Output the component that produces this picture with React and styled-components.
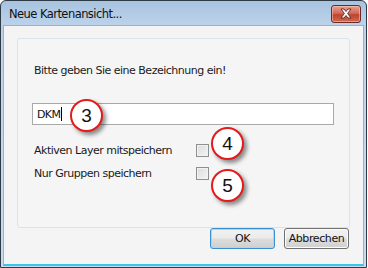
import React from "react";
import styled, { createGlobalStyle } from "styled-components";

const GlobalStyle = createGlobalStyle`
  html, body {
    margin: 0;
    padding: 0;
    background: #ffffff;
  }
  body {
    font-family: "DejaVu Sans", "Liberation Sans", sans-serif;
  }
`;

function App() {
  return (
    <>
      <GlobalStyle />
      <Window>
        <TitleBar>
          <Title>Neue Kartenansicht...</Title>
          <CloseBtn>
            <svg width="14" height="11" viewBox="0 0 14 11">
              <path
                d="M2 1 L5 1 L7 3.5 L9 1 L12 1 L8.6 5.5 L12 10 L9 10 L7 7.5 L5 10 L2 10 L5.4 5.5 Z"
                fill="#ffffff"
                stroke="#5a2420"
                strokeWidth="0.9"
                strokeLinejoin="round"
              />
            </svg>
          </CloseBtn>
        </TitleBar>
        <Client>
          <Panel>
            <Prompt>Bitte geben Sie eine Bezeichnung ein!</Prompt>
            <InputWrap>
              <Input>
                DKM<Caret />
              </Input>
              <Callout x={38} y={-4}>3</Callout>
            </InputWrap>
            <CheckRow first>
              <Label>Aktiven Layer mitspeichern</Label>
              <Checkbox />
              <Callout x={179} y={-17}>4</Callout>
            </CheckRow>
            <CheckRow>
              <Label>Nur Gruppen speichern</Label>
              <Checkbox />
              <Callout x={179} y={2}>5</Callout>
            </CheckRow>
          </Panel>
          <ButtonRow>
            <Button primary>OK</Button>
            <Button>Abbrechen</Button>
          </ButtonRow>
        </Client>
      </Window>
    </>
  );
}

const Window = styled.div`
  box-sizing: border-box;
  width: 367px;
  height: 268px;
  border: 1px solid #2e3a46;
  border-radius: 6px 6px 0 0;
  background: linear-gradient(to bottom, #a8c3df 0px, #bcd2ea 24px, #c9dcef 100%);
  padding: 0 2px 1px 2px;
  display: flex;
  flex-direction: column;
`;

const TitleBar = styled.div`
  height: 24px;
  display: flex;
  align-items: center;
  justify-content: space-between;
  padding: 0 3px 0 6px;
`;

const Title = styled.div`
  font-family: "DejaVu Sans", sans-serif;
  font-size: 11.5px;
  color: #101010;
  letter-spacing: -0.55px;
  margin-top: 2px;
`;

const CloseBtn = styled.div`
  box-sizing: border-box;
  width: 30px;
  height: 18px;
  margin-top: 1px;
  border: 1px solid #6b2a25;
  border-radius: 3px;
  background: linear-gradient(to bottom, #e8a090 0%, #d46a58 45%, #c0432f 55%, #cf6a52 100%);
  display: flex;
  align-items: center;
  justify-content: center;
  box-shadow: inset 0 0 0 1px rgba(255, 210, 200, 0.5);
`;

const Client = styled.div`
  flex: 1;
  background: #f4f4f4;
  border: 1px solid #8fb4d6;
  border-bottom: 2px solid #3cc4ea;
  display: flex;
  flex-direction: column;
  padding: 12px 13px 15px 13px;
`;

const Panel = styled.div`
  position: relative;
  height: 164px;
  border: 1px solid #d9e3ec;
  border-radius: 3px;
  background: #f5f5f5;
  padding: 24px 15px 0 14px;
`;

const Prompt = styled.div`
  font-family: "DejaVu Sans", sans-serif;
  font-size: 11px;
  line-height: 15px;
  color: #1a1a1a;
  padding-left: 2px;
  letter-spacing: -0.5px;
`;

const InputWrap = styled.div`
  position: relative;
  margin-top: 25px;
`;

const Input = styled.div`
  box-sizing: border-box;
  height: 22px;
  border: 1px solid #a9a9a9;
  background: #ffffff;
  display: flex;
  align-items: center;
  padding-left: 4px;
  font-family: "DejaVu Sans", sans-serif;
  font-size: 11px;
  letter-spacing: -0.6px;
  color: #111;
`;

const Caret = styled.span`
  display: inline-block;
  width: 1px;
  height: 14px;
  background: #000;
  margin-left: 1px;
`;

const CheckRow = styled.div`
  position: relative;
  display: flex;
  align-items: center;
  height: 13px;
  margin-top: ${(p) => (p.first ? "19px" : "10px")};
`;

const Label = styled.div`
  width: 162px;
  padding-left: 2px;
  font-family: "DejaVu Sans", sans-serif;
  font-size: 11px;
  color: #1a1a1a;
  letter-spacing: -0.5px;
`;

const Checkbox = styled.div`
  box-sizing: border-box;
  width: 13px;
  height: 13px;
  border: 1px solid #8f8f8f;
  background: linear-gradient(135deg, #dcdcdc 0%, #f4f4f4 100%);
  box-shadow: inset 0 0 0 1px #f2f2f2;
`;

const Callout = styled.div`
  position: absolute;
  left: ${(p) => p.x}px;
  top: ${(p) => p.y}px;
  box-sizing: border-box;
  width: 33px;
  height: 33px;
  border-radius: 50%;
  border: 2.5px solid #e31b1b;
  background: #ffffff;
  box-shadow: 3px 3px 4px rgba(0, 0, 0, 0.45);
  display: flex;
  align-items: center;
  justify-content: center;
  font-family: "Liberation Sans", sans-serif;
  font-size: 19px;
  color: #111;
`;

const ButtonRow = styled.div`
  margin-top: auto;
  display: flex;
  justify-content: flex-end;
  gap: 9px;
  padding-right: 1px;
`;

const Button = styled.div`
  box-sizing: border-box;
  width: 65px;
  height: 21px;
  border-radius: 3px;
  border: 1px solid ${(p) => (p.primary ? "#3c8fcf" : "#707070")};
  background: linear-gradient(to bottom, #f2f2f2 0%, #ebebeb 48%, #dddddd 52%, #cfcfcf 100%);
  box-shadow: inset 0 0 0 1px ${(p) => (p.primary ? "#9fdcf6" : "#fcfcfc")};
  display: flex;
  align-items: center;
  justify-content: center;
  font-family: "DejaVu Sans", sans-serif;
  font-size: 11px;
  color: #111;
  letter-spacing: -0.4px;
`;

export default App;
